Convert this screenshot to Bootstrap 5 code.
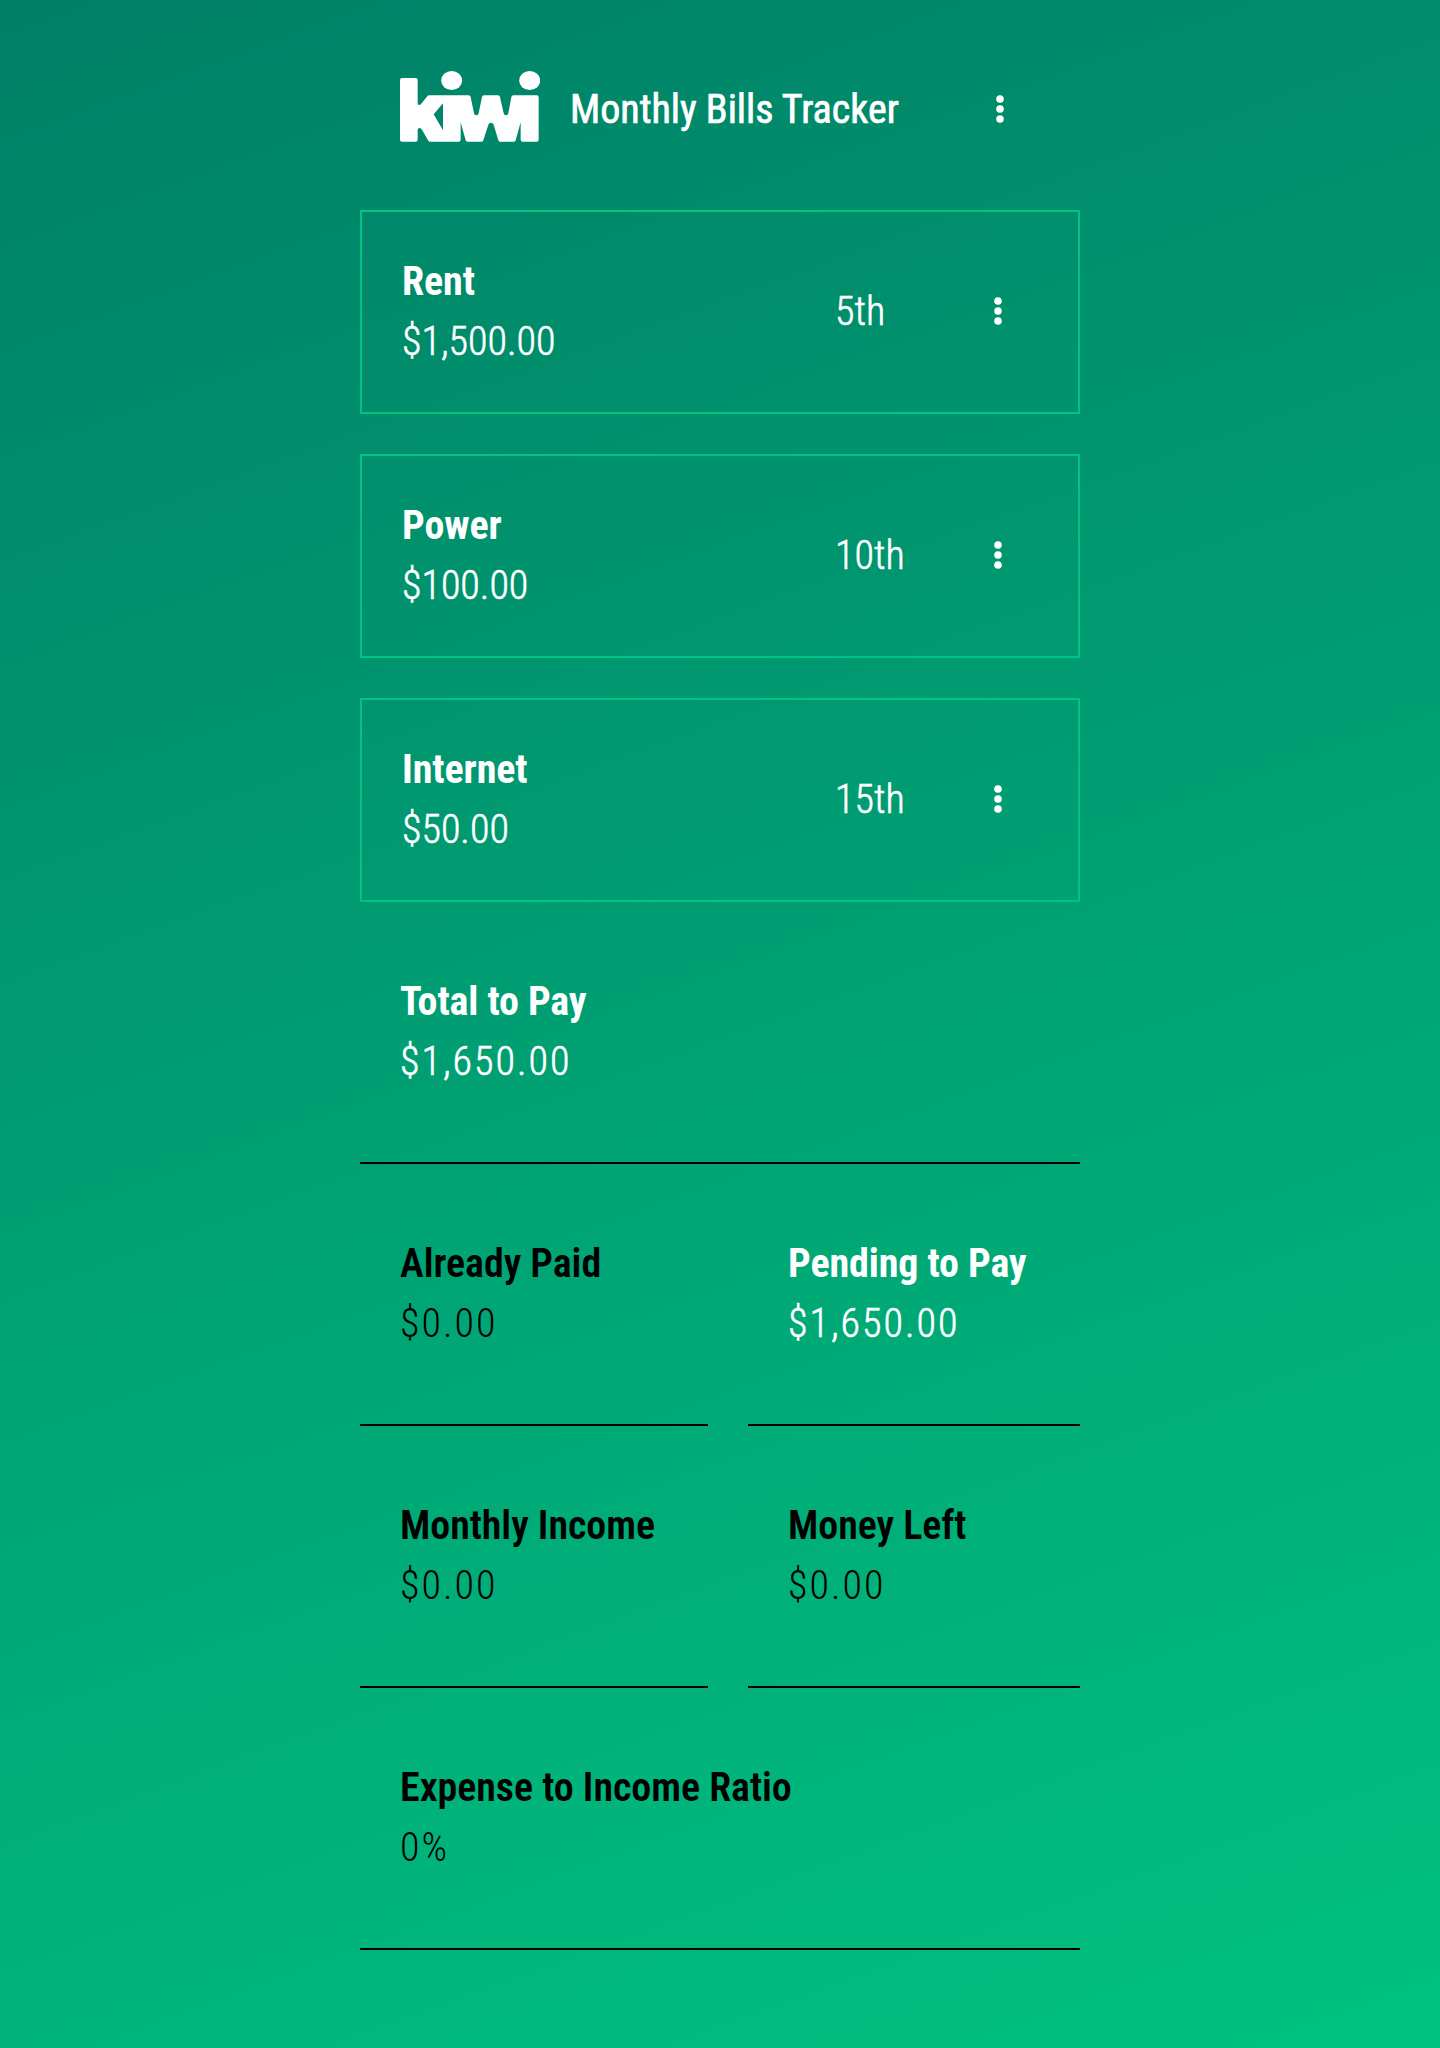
<!DOCTYPE html>
<html lang="en">
<head>
<meta charset="utf-8">
<meta name="viewport" content="width=device-width, initial-scale=1">
<title>Kiwi – Monthly Bills Tracker</title>
<link rel="stylesheet" href="https://cdn.jsdelivr.net/npm/bootstrap@5.3.0/dist/css/bootstrap.min.css">
<style>
body{font-family:"Roboto Condensed",Roboto,sans-serif;font-size:40px;line-height:60px;color:#000;min-height:2048px;background:linear-gradient(160deg,#007f66,#00c280) no-repeat}
.tracker{width:720px}
.tracker-head{height:210px;padding:10px 40px 0}
.kiwi-logo{width:140px;height:72px;margin:0 30px 8px 0}
.app-title{font-size:40px;line-height:60px;font-weight:400;-webkit-text-stroke:.7px #fff}
.menu-btn{width:80px;height:60px;color:#fff}
.bill{border:2px solid #00c582;padding:40px}
.bill-list{gap:40px}
.bill-day{width:123px}
.text-white .fw-light,.fw-light.text-white{-webkit-text-stroke:.55px #fff}
.label-strong{font-weight:700;letter-spacing:-.1px}
.label-mid{font-weight:600;letter-spacing:-.05px}
.stat{padding:70px 40px;border-bottom:2px solid #000}
.stat-value{letter-spacing:2px}
.stat-row{gap:40px}
.stat-left{width:348px}
</style>
</head>
<body>
<main class="tracker mx-auto text-nowrap">
  <header class="tracker-head d-flex align-items-center text-white">
    <svg class="kiwi-logo flex-shrink-0" viewBox="30 30 420 216" fill="#fff" role="img" aria-label="kiwi">
      <ellipse cx="185" cy="61.500" rx="31.500" ry="28.500"/>
      <ellipse cx="419" cy="61.500" rx="31.500" ry="28.500"/>
      <path fill-rule="evenodd" d="M36 54H77Q83 54 83 60V130Q83 135 87 135Q91 135 93 132L112 109Q114 106 118 106H236Q241 106 242 111L252 160Q253 166 259 166Q265 166 266 160L276 111Q277 106 282 106H324Q329 106 330 111L341 160Q342 166 348 166Q354 166 355 160L364 111Q365 106 370 106H440Q446 106 446 112V239Q446 245 440 245H398Q392 245 392 239V187L377 241Q376 245 372 245H330Q326 245 325 241L311 194Q309 188 303 188Q297 188 295 194L280 241Q279 245 275 245H232Q228 245 227 241L212 187V239Q212 245 206 245H120Q117 245 115 242L96 209Q94 204 89 204Q83 204 83 210V239Q83 245 77 245H36Q30 245 30 239V60Q30 54 36 54ZM159 130L131 163L159 211Z"/>
    </svg>
    <h1 class="app-title mb-0">Monthly Bills Tracker</h1>
    <button class="menu-btn btn border-0 p-0 ms-auto d-flex align-items-center justify-content-center" aria-label="Menu">
      <svg width="8" height="30" viewBox="0 0 8 30" fill="currentColor"><circle cx="4" cy="4" r="3.800"/><circle cx="4" cy="14" r="3.800"/><circle cx="4" cy="24" r="3.800"/></svg>
    </button>
  </header>

  <section class="bill-list d-flex flex-column text-white">
    <article class="bill d-flex align-items-center">
      <div class="flex-grow-1"><div class="label-strong">Rent</div><div class="fw-light">$1,500.00</div></div>
      <div class="bill-day fw-light">5th</div>
      <button class="menu-btn btn border-0 p-0 d-flex align-items-center justify-content-center" aria-label="Rent options"><svg width="8" height="30" viewBox="0 0 8 30" fill="currentColor"><circle cx="4" cy="4" r="3.800"/><circle cx="4" cy="14" r="3.800"/><circle cx="4" cy="24" r="3.800"/></svg></button>
    </article>
    <article class="bill d-flex align-items-center">
      <div class="flex-grow-1"><div class="label-strong">Power</div><div class="fw-light">$100.00</div></div>
      <div class="bill-day fw-light">10th</div>
      <button class="menu-btn btn border-0 p-0 d-flex align-items-center justify-content-center" aria-label="Power options"><svg width="8" height="30" viewBox="0 0 8 30" fill="currentColor"><circle cx="4" cy="4" r="3.800"/><circle cx="4" cy="14" r="3.800"/><circle cx="4" cy="24" r="3.800"/></svg></button>
    </article>
    <article class="bill d-flex align-items-center">
      <div class="flex-grow-1"><div class="label-strong">Internet</div><div class="fw-light">$50.00</div></div>
      <div class="bill-day fw-light">15th</div>
      <button class="menu-btn btn border-0 p-0 d-flex align-items-center justify-content-center" aria-label="Internet options"><svg width="8" height="30" viewBox="0 0 8 30" fill="currentColor"><circle cx="4" cy="4" r="3.800"/><circle cx="4" cy="14" r="3.800"/><circle cx="4" cy="24" r="3.800"/></svg></button>
    </article>
  </section>

  <section>
    <div class="stat text-white"><div class="label-strong">Total to Pay</div><div class="stat-value fw-light">$1,650.00</div></div>
    <div class="stat-row d-flex">
      <div class="stat stat-left"><div class="label-mid">Already Paid</div><div class="stat-value fw-light">$0.00</div></div>
      <div class="stat flex-grow-1"><div class="label-strong text-white">Pending to Pay</div><div class="stat-value fw-light text-white">$1,650.00</div></div>
    </div>
    <div class="stat-row d-flex">
      <div class="stat stat-left"><div class="label-mid">Monthly Income</div><div class="stat-value fw-light">$0.00</div></div>
      <div class="stat flex-grow-1"><div class="label-mid">Money Left</div><div class="stat-value fw-light">$0.00</div></div>
    </div>
    <div class="stat"><div class="label-mid">Expense to Income Ratio</div><div class="stat-value fw-light">0%</div></div>
  </section>
</main>
<script src="https://cdn.jsdelivr.net/npm/bootstrap@5.3.0/dist/js/bootstrap.bundle.min.js"></script>
</body>
</html>
